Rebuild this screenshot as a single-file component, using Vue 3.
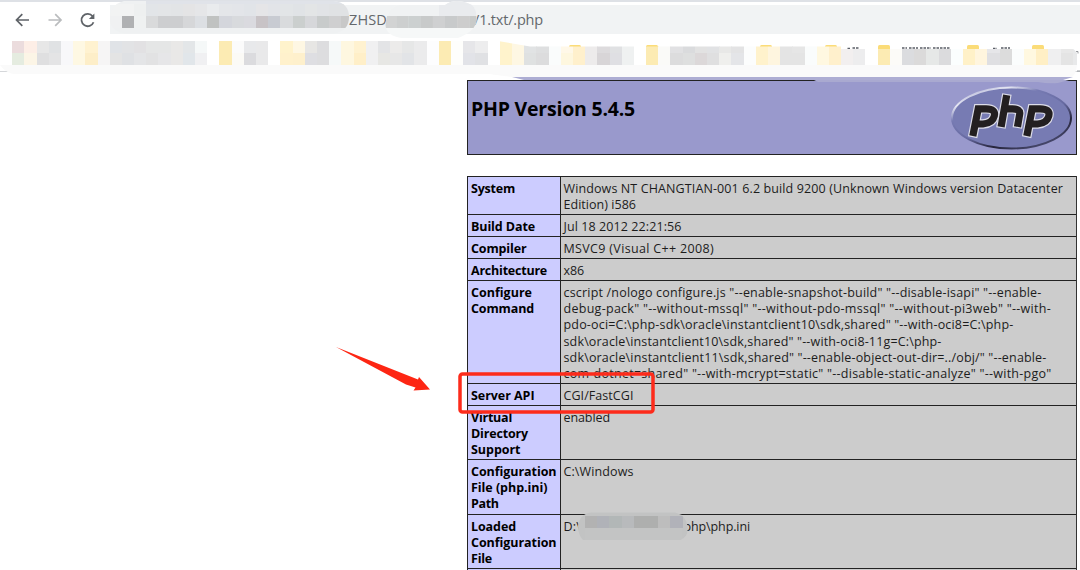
<script setup>
import { ref, onMounted } from 'vue'

const CELL = 12.19
const urlTop = 'f2f3f3 f2f3f3 eef0f0 e2e5e8 e3e5e7 e2e4e6 e4e4e5 e5e6e8 e9ebed e4e6e9 e3e5e9 e1e4e8 e5e5e7 e2e4e8 e2e5e7 e0e3e6 e3e5e6 e1e3e6 e0e2e4 e0e2e4'.split(' ')
const urlBottom = 'f0f1f2 b0b1b3 eff1f1 d9dadb cdced0 cdced0 d6d7d9 dcdfe3 c0c2c1 d4d6dc d8dadd dadadf c8c3c6 c8cbd2 d9dbdd cbcfce d6d7da c8cbcb cfcfd0 c8c8c8'.split(' ')
const pathBottom = 'd2d3d3 cdcfcf ccd0d0 c8caca cfd0d1 c8cacb cdcdcd c8cac9'.split(' ')

const marks = (
  'ebdcdd/e5ece0 fdeee6/fcf5e6 e7e7e7/dfdfe0 e0e2e4/e4e4e5 f8f8fa fef8e3 fff2d0/fdeec8 f6f5f5 e0e3e7/e4e4e4 e2e3e5/dfe1e4 ' +
  'e2e1e3/e4e5e7 e5e6e6/e2e2e3 e5e6e6/e6e6e8 e9e8e7 e3e6e8/e1e6ea f5f8f8/f0f0f2 ffffff fcebb3 fbfbfb/fbfaf6 e8e9eb/dbdbde ' +
  'e9e9ea ffffff fff3cc/fff1cc fef7e3/fef0cc e7e6e4/dedee2 dddddf f6f9f9 fef7e0 fff2d0/ffefc8 f0f0f1 ' +
  'e3e4e6/e7e7e4 ecebea/e7e7e7 e6e7e7/e2e4e7 ebebec fdfdfe fcebb3 fefefc e6e6e9/e2e3e8 ededee/e0e1e4 ffffff ' +
  'fff3cc fef7e3 e1e3e4/dfe1e1 dedfe0/dcdcdd fafcfc fff8e8/fef7df fff0cc edebeb dddbdd/d8d5d7 e0e1e3/dfdfe3 ' +
  'eff1f1 ffffff fcebb3 fafaf8 e1e1e3/dcdcdd dadbdd/dedfdf e2e2e2/dcd8d9 e1e2e4/dfdfe0 e8e8e7/efefed e3e3e4/e4e5e8 ' +
  'fcfdfd fff2cc fef5df e4e4e4 e6e6e6/e4e4e4 fafcfc fff8e1 fff0cc f2efef ededee ' +
  'ffffff fcebb3 fcfbf8 dbdcdf dbdada e6e8e7 dbdbdd fbfefe fff1c8 fff5de ' +
  'e6e6e9/dfdfe2 dcdcdc fbfdfd fff8e0 ffefc5 efeff0 e8e8e8/e4e4e4 e8e9ea'
).split(' ').map((c, i) => {
  const [a, b] = c.split('/')
  return { x: (i + 1) * CELL, a: '#' + a, b: '#' + (b || a) }
})
const tabs = [569, 646, 760, 825, 878, 967, 1032]

const rows = [
  { h: 38, k: [['System', 44]], v: [['Windows NT CHANGTIAN-001 6.2 build 9200 (Unknown Windows version Datacenter', 499.5], ['Edition) i586', 72.5]] },
  { h: 22, k: [['Build Date', 64]], v: [['Jul 18 2012 22:21:56', 118]] },
  { h: 22, k: [['Compiler', 55.5]], v: [['MSVC9 (Visual C++ 2008)', 150.5]] },
  { h: 22, k: [['Architecture', 76]], v: [['x86', 20.5]] },
  { h: 103, k: [['Configure', 61], ['Command', 63]], v: [
    ['cscript /nologo configure.js "--enable-snapshot-build" "--disable-isapi" "--enable-', 478],
    ['debug-pack" "--without-mssql" "--without-pdo-mssql" "--without-pi3web" "--with-', 487.5],
    ['pdo-oci=C:\\php-sdk\\oracle\\instantclient10\\sdk,shared" "--with-oci8=C:\\php-', 450],
    ['sdk\\oracle\\instantclient10\\sdk,shared" "--with-oci8-11g=C:\\php-', 378],
    ['sdk\\oracle\\instantclient11\\sdk,shared" "--enable-object-out-dir=../obj/" "--enable-', 483],
    ['com-dotnet=shared" "--with-mcrypt=static" "--disable-static-analyze" "--with-pgo"', 488]
  ] },
  { h: 22, k: [['Server API', 63.5]], v: [['CGI/FastCGI', 70]] },
  { h: 54, k: [['Virtual', 41], ['Directory', 57], ['Support', 49.5]], v: [['enabled', 46.5]] },
  { h: 55, k: [['Configuration', 85.5], ['File (php.ini)', 76.5], ['Path', 27.5]], v: [['C:\\Windows', 70]] },
  { h: 54, k: [['Loaded', 45], ['Configuration', 85.5], ['File', 21]], v: [['D:\\', 17.5, 'php\\php.ini', 66.5]] }
]

const root = ref(null)
onMounted(() => {
  root.value.querySelectorAll('[data-w]').forEach((el) => {
    const extra = Number(el.dataset.w) - el.getBoundingClientRect().width
    el.style.letterSpacing = extra / el.textContent.length + 'px'
  })
})
</script>

<template>
  <div ref="root" class="page">
    <header class="browser">
      <nav class="toolbar">
        <svg class="nav" width="110" height="30" viewBox="0 0 110 30" fill="none" stroke-width="1.7">
          <path d="M29 15H17M22.3 9.2 16.500 15l5.800 5.800" stroke="#5f6368" />
          <path d="M48.500 15h12M55.200 9.200 61 15l-5.800 5.800" stroke="#babcbe" />
          <path d="M92.600 11.200A6.200 6.200 0 1 0 93.500 17.200" stroke="#5f6368" stroke-width="1.8" />
          <path d="M94.400 8.500V14H88.900Z" fill="#5f6368" />
        </svg>
        <div class="address">
          <span class="url"><span data-w="38">ZHSD</span><i class="gap"></i><span data-w="69">/1.txt/.php</span></span>
        </div>
      </nav>
      <svg class="mosaic" width="1080" height="86" viewBox="0 0 1080 86">
        <defs>
          <clipPath id="urlClip"><path d="M124 1H334Q349 3 349 17T334 33.5H124Q110 31 110 18T124 1Z" /></clipPath>
          <clipPath id="pathClip"><path d="M399 5H445Q450 1 457 1T472 5Q477 9 476.500 20T458 38H402Q387 36 385.500 26Q386 8 399 5Z" /></clipPath>
          <clipPath id="markClip"><path d="M0 41H498L530 46.500H1048Q1056 44 1064 45T1077 53V65H0Z" /></clipPath>
        </defs>
        <g clip-path="url(#urlClip)" shape-rendering="crispEdges">
          <rect x="108" y="0" width="250" height="40" fill="#eff1f2" />
          <rect x="146" y="0" width="210" height="5" fill="#e0e3e9" />
          <rect v-for="(c, i) in urlTop" :key="'a' + i" :x="(i + 9) * CELL" y="4" :width="CELL + 0.3" height="12" :fill="'#' + c" />
          <rect v-for="(c, i) in urlBottom" :key="'b' + i" :x="(i + 9) * CELL" y="16" :width="CELL + 0.3" height="12" :fill="'#' + c" />
        </g>
        <g clip-path="url(#pathClip)">
          <rect x="380" y="0" width="100" height="40" fill="#f6f8f8" />
          <rect x="427" y="0" width="50" height="16" fill="#e9ebee" />
          <rect x="380" y="5" width="59" height="11" fill="#f0f2f3" />
          <rect v-for="(c, i) in pathBottom" :key="'c' + i" :x="(i + 31.5) * CELL" y="16" :width="CELL + 0.3" height="12" :fill="'#' + c" />
        </g>
        <rect v-for="x in tabs" :key="x" :x="x" y="45" width="12" height="5" rx="1.500" fill="#fbdc78" />
        <path d="M847.500 48.500h3m2-.5h7M902 48h5m2 0h9m2 0h11m2 0h17M993 48.500h4m4-.5h9" stroke="#5a5e66" stroke-width="1.400" stroke-dasharray="2.500 1" />
        <g clip-path="url(#markClip)" shape-rendering="crispEdges">
          <template v-for="m in marks" :key="m.x">
            <rect :x="m.x" :y="m.x > 840 ? 49 : 41" :width="CELL + 0.3" height="12" :fill="m.a" />
            <rect :x="m.x" y="53" :width="CELL + 0.3" height="12" :fill="m.b" />
          </template>
        </g>
        <path d="M0 71.500H1080" stroke="#d5d7da" />
        <path d="M0 65H1077Q1076 74 1072 77H512L488 74H12Q4 71 0 65Z" fill="#fafafa" />
        <path d="M7 72Q10 74 14 74H488L512 77.500H467V79.500H0V72.500Z" fill="#fff" />
        <path d="M1076 51.500h2v2M1077 71h3" stroke="#70747a" stroke-width=".7" fill="none" />
      </svg>
    </header>

    <main class="info">
      <section class="banner">
        <h1><span data-w="164">PHP Version 5.4.5</span></h1>
        <svg class="logo" width="122" height="66" viewBox="0 0 122 66">
          <defs>
            <linearGradient id="rim" x1="0.150" y1="0" x2="0.850" y2="1">
              <stop offset="0" stop-color="#a0a3cd" /><stop offset=".15" stop-color="#e6e7f3" />
              <stop offset=".3" stop-color="#777bb3" /><stop offset=".55" stop-color="#676aa1" />
              <stop offset=".75" stop-color="#25243a" /><stop offset="1" stop-color="#555781" />
            </linearGradient>
          </defs>
          <ellipse cx="61.500" cy="33" rx="59.500" ry="30.500" fill="#777bb3" stroke="url(#rim)" stroke-width="2" />
          <g fill="none">
            <g stroke="#dcdce8" stroke-width="9.600">
              <path d="M22.600 52.200 28.200 23.800H36Q46 23.800 44.300 31T33 39H26.500" />
              <path d="M56.900 9 50.900 43M55 23.800H62.500Q70.500 23.800 69.700 29L67.300 43" />
              <path d="M76.600 52.200 82.200 23.800H90Q100.500 23.800 98.800 31T87.500 39H80.500" />
            </g>
            <g stroke="#231f20" stroke-width="7.200">
              <path d="M22.800 51 28.200 23.800H36Q46 23.800 44.300 31T33 39H26.500" />
              <path d="M56.700 10.200 51.100 41.800M55 23.800H62.500Q70.500 23.800 69.700 29L67.500 41.800" />
              <path d="M76.800 51 82.200 23.800H90Q100.500 23.800 98.800 31T87.500 39H80.500" />
            </g>
          </g>
        </svg>
        <svg class="smear" width="610" height="8" viewBox="0 0 610 8">
          <path d="M44 0H606L602 3H56Z" fill="#adadd3" />
          <path d="M346 3H601L590 6Q580 7 570 5H350Z" fill="#a9a9d0" />
          <path d="M595 3 605 0H610V3Z" fill="#fff" />
        </svg>
      </section>

      <section class="table">
        <div v-for="(r, i) in rows" :key="i" class="row" :style="{ height: r.h + 'px' }">
          <div class="key"><div v-for="l in r.k" :key="l[0]" class="line"><span :data-w="l[1]">{{ l[0] }}</span></div></div>
          <div class="val">
            <div v-for="l in r.v" :key="l[0]" class="line">
              <span :data-w="l[1]">{{ l[0] }}</span><span v-if="l[2]" class="after" :data-w="l[3]">{{ l[2] }}</span>
            </div>
          </div>
        </div>
        <div class="row last"><div class="key"></div><div class="val"></div></div>
      </section>
    </main>

    <svg class="marker" width="1080" height="570" viewBox="0 0 1080 570">
      <defs>
        <clipPath id="blurClip"><path d="M578 526Q580 513 592 512.500H675Q686 515 687.500 526T680 540H583Q578 535 578 526Z" /></clipPath>
      </defs>
      <g clip-path="url(#blurClip)" shape-rendering="crispEdges">
        <rect x="577" y="512" width="112" height="29" fill="#c2c3c3" />
        <rect x="585" y="516" width="12.200" height="12" fill="#b2b2b2" />
        <rect x="597.200" y="516" width="12.200" height="12" fill="#b0b2b8" />
        <rect x="609.400" y="516" width="12.200" height="12" fill="#b2b7b7" />
        <rect x="621.600" y="516" width="12.200" height="12" fill="#b8babc" />
        <rect x="633.800" y="516" width="24.400" height="12" fill="#aeafae" />
        <rect x="658.200" y="516" width="12.200" height="12" fill="#bdbdbd" />
        <rect x="670.400" y="516" width="12.200" height="12" fill="#b1b2b9" />
        <rect x="585" y="528" width="97" height="12" fill="#c3c4c4" />
      </g>
      <rect x="460" y="374" width="193" height="38" rx="2.500" fill="none" stroke="#fd2b1b" stroke-width="3.500" />
      <path d="M336 347 418 379.500 419 377 430 389.500 413.500 390.500 415.500 387.500 406 384.500Z" fill="#fd2613" />
    </svg>
  </div>
</template>

<style>
html, body { margin: 0; background: #fff; overflow: hidden; }
</style>

<style scoped>
.page { position: relative; width: 1080px; height: 570px; overflow: hidden; background: #fff; font-family: "Open Sans", "Noto Sans", sans-serif; color: #000; }
.browser { position: relative; height: 80px; box-sizing: border-box; border-top: 2px solid #dee1e6; }
.toolbar { display: flex; height: 36px; padding-top: 3px; box-sizing: border-box; }
.nav { flex: none; }
.address { flex: 1; height: 29px; background: #f1f3f4; }
.url { display: flex; padding-left: 239px; font-size: 14.5px; line-height: 29px; color: #64686c; white-space: pre; }
.gap { width: 87px; }
.mosaic { position: absolute; left: 0; top: -2px; }
.info { width: 610px; margin-left: 467px; }
.banner { position: relative; display: flex; justify-content: space-between; height: 75px; box-sizing: border-box; border: 1px solid #222; background: #9999cc; }
h1 { margin: 11px 0 0 3px; font-size: 19.5px; line-height: 33px; font-weight: 700; white-space: pre; }
.logo { flex: none; margin: 4px 4px 0 0; }
.smear { position: absolute; left: 0; top: -4px; }
.table { margin-top: 21px; border-right: 1px solid #333; }
.row { display: flex; }
.row.last { height: 2px; }
.key, .val { border-top: 1px solid #222; border-left: 1px solid #222; box-sizing: border-box; padding: 4px 0 0 3px; }
.row.last .key, .row.last .val { padding: 0; }
.key { width: 93px; background: #ccccff; font-weight: 700; }
.val { flex: 1; padding-left: 2.5px; background: #cccccc; color: #1c1c1c; }
.line { display: flex; height: 16.2px; line-height: 16.2px; font-size: 12.5px; white-space: pre; }
.after { margin-left: 102.5px; }
.marker { position: absolute; left: 0; top: 0; }
</style>
